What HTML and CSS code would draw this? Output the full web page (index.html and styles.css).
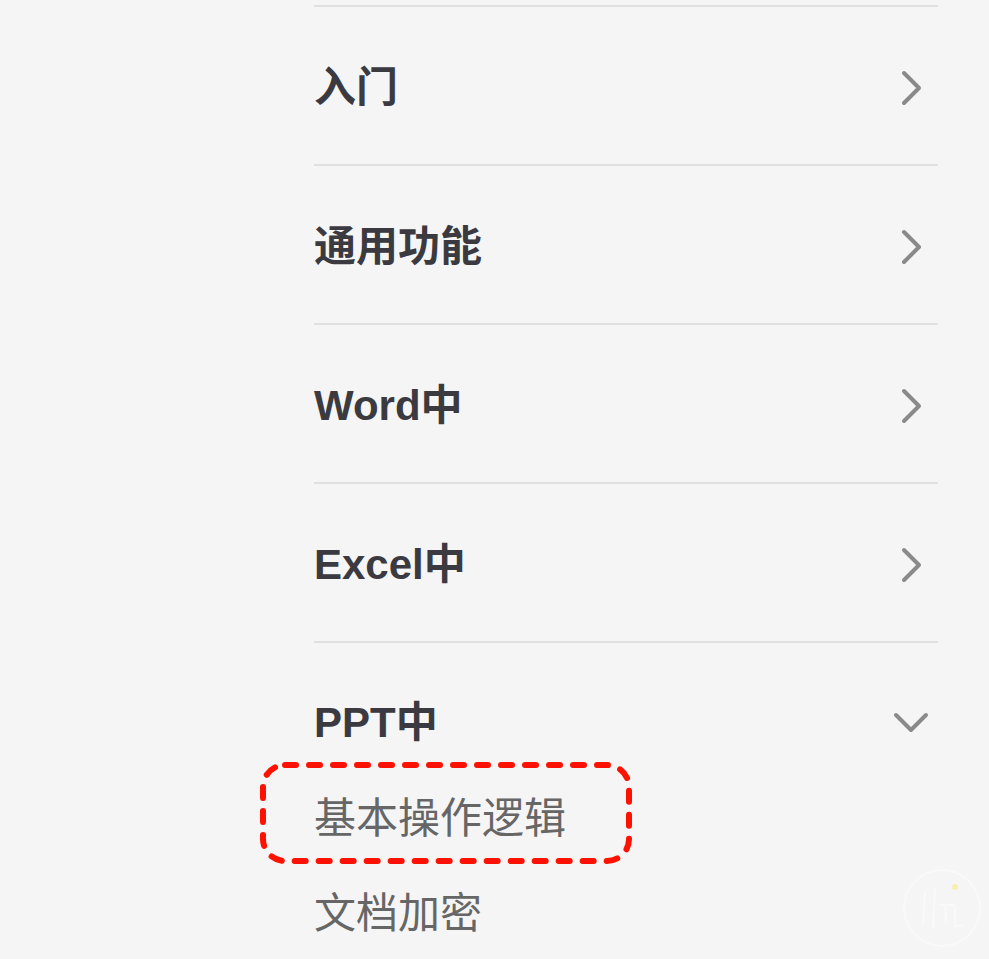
FILE: index.html
```html
<!DOCTYPE html>
<html lang="zh">
<head>
<meta charset="utf-8">
<title>菜单</title>
<link rel="stylesheet" href="styles.css">
</head>
<body>
<div class="menu">
  <div class="section">
    <div class="head"><span class="title">入门</span>
      <svg class="chev" width="30" height="40" viewBox="0 0 30 40"><path d="M5 5 L20 20 L5 35" /></svg></div>
  </div>
  <div class="section">
    <div class="head"><span class="title">通用功能</span>
      <svg class="chev" width="30" height="40" viewBox="0 0 30 40"><path d="M5 5 L20 20 L5 35" /></svg></div>
  </div>
  <div class="section">
    <div class="head"><span class="title">Word中</span>
      <svg class="chev" width="30" height="40" viewBox="0 0 30 40"><path d="M5 5 L20 20 L5 35" /></svg></div>
  </div>
  <div class="section">
    <div class="head"><span class="title">Excel中</span>
      <svg class="chev" width="30" height="40" viewBox="0 0 30 40"><path d="M5 5 L20 20 L5 35" /></svg></div>
  </div>
  <div class="section open">
    <div class="head"><span class="title">PPT中</span>
      <svg class="chev-down" width="40" height="30" viewBox="0 0 40 30"><path d="M5 7 L20 22 L35 7" /></svg></div>
    <div class="sub">基本操作逻辑</div>
    <div class="sub">文档加密</div>
  </div>
</div>
<svg class="highlight" width="374" height="104" viewBox="0 0 374 104"><rect x="4" y="4" width="366" height="96" rx="22" ry="22" /></svg>
<svg class="watermark" width="90" height="90" viewBox="0 0 90 90">
  <circle cx="45" cy="45" r="38" />
  <path d="M26 62 L28 30 M38 26 L36 66 M42 42 L58 42 M48 42 L49 60 M58 44 L58 64 L66 62" />
  <circle class="dot" cx="58" cy="24" r="3" />
</svg>
</body>
</html>
```
FILE: styles.css
```css
html, body {
  margin: 0;
  padding: 0;
  background: #f5f5f5;
}
body {
  width: 989px;
  height: 959px;
  overflow: hidden;
  position: relative;
  font-family: "Liberation Sans", "Noto Sans CJK SC", sans-serif;
}
.menu {
  margin-left: 314px;
  padding-top: 5px;
  width: 624px;
  display: flex;
  flex-direction: column;
}
.section {
  border-top: 2px solid #e0e0e0;
}
.head {
  height: 157px;
  box-sizing: border-box;
  padding: 51px 0 46px;
  display: flex;
  align-items: center;
  justify-content: space-between;
}
.title {
  font-size: 42px;
  font-weight: 700;
  line-height: 60px;
  color: #3a3a40;
}
.chev {
  margin-right: 9px;
  fill: none;
  stroke: #8a8a8a;
  stroke-width: 4;
  stroke-linecap: round;
  stroke-linejoin: round;
}
.chev-down {
  margin-right: 7px;
  fill: none;
  stroke: #8a8a8a;
  stroke-width: 4;
  stroke-linecap: round;
  stroke-linejoin: round;
}
.open .head {
  height: auto;
  padding: 50px 0 0;
}
.open .head + .sub {
  margin-top: 18px;
}
.sub {
  font-size: 42px;
  line-height: 95px;
  color: #666666;
  font-weight: 400;
}
.highlight {
  position: absolute;
  left: 259px;
  top: 761px;
  fill: none;
  stroke: #ff1100;
  stroke-width: 6;
  stroke-dasharray: 11 13;
  stroke-linecap: round;
}
.watermark {
  position: absolute;
  left: 897px;
  top: 863px;
  fill: none;
  stroke: #f9f9f9;
  stroke-width: 2;
}
.watermark .dot {
  fill: #f6f0b0;
  stroke: none;
}
```
